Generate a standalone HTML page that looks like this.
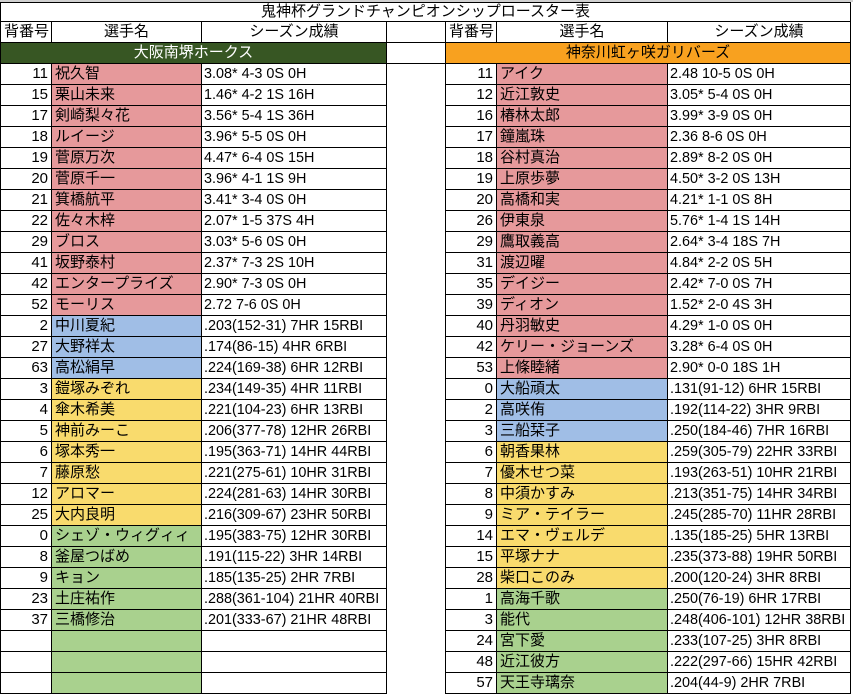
<!DOCTYPE html>
<html><head><meta charset="utf-8"><style>
body{margin:0;background:#fff;width:853px;height:694px;overflow:hidden;font-family:"Liberation Sans","Noto Sans CJK JP",sans-serif;font-size:15px;color:#000}
.top{height:2px;background:#d0d0d0}
table{border-collapse:collapse;table-layout:fixed;width:850px}
td{border:1px solid #000;height:20px;padding:0 3px;white-space:nowrap;overflow:hidden;line-height:20px}
td.n{text-align:right}
td.g{border-top:none;border-bottom:none}
td.s{font-size:14.4px;padding-left:2px}
.c{text-align:center}
.p{background:#e6999b}.b{background:#a0bee6}.y{background:#f9db6d}.gr{background:#a9d18e}
.hg{background:#375623;color:#fff;text-align:center}
.ho{background:#f8a11f;text-align:center}
</style></head><body><div class="top"></div>
<table>
<colgroup><col style="width:51px"><col style="width:150px"><col style="width:185px"><col style="width:59px"><col style="width:51px"><col style="width:171px"><col style="width:183px"></colgroup>
<tr><td colspan="7" class="c" style="height:18px;line-height:18px">鬼神杯グランドチャンピオンシップロースター表</td></tr>
<tr><td class="c">背番号</td><td class="c">選手名</td><td class="c">シーズン成績</td><td></td><td class="c">背番号</td><td class="c">選手名</td><td class="c">シーズン成績</td></tr>
<tr><td colspan="3" class="hg">大阪南堺ホークス</td><td></td><td colspan="3" class="ho">神奈川虹ヶ咲ガリバーズ</td></tr>
<tr><td class="n">11</td><td class="p">祝久智</td><td class="s">3.08* 4-3 0S 0H</td><td class="g"></td><td class="n">11</td><td class="p">アイク</td><td class="s">2.48 10-5 0S 0H</td></tr>
<tr><td class="n">15</td><td class="p">栗山未来</td><td class="s">1.46* 4-2 1S 16H</td><td class="g"></td><td class="n">12</td><td class="p">近江敦史</td><td class="s">3.05* 5-4 0S 0H</td></tr>
<tr><td class="n">17</td><td class="p">剣崎梨々花</td><td class="s">3.56* 5-4 1S 36H</td><td class="g"></td><td class="n">16</td><td class="p">椿林太郎</td><td class="s">3.99* 3-9 0S 0H</td></tr>
<tr><td class="n">18</td><td class="p">ルイージ</td><td class="s">3.96* 5-5 0S 0H</td><td class="g"></td><td class="n">17</td><td class="p">鐘嵐珠</td><td class="s">2.36 8-6 0S 0H</td></tr>
<tr><td class="n">19</td><td class="p">菅原万次</td><td class="s">4.47* 6-4 0S 15H</td><td class="g"></td><td class="n">18</td><td class="p">谷村真治</td><td class="s">2.89* 8-2 0S 0H</td></tr>
<tr><td class="n">20</td><td class="p">菅原千一</td><td class="s">3.96* 4-1 1S 9H</td><td class="g"></td><td class="n">19</td><td class="p">上原歩夢</td><td class="s">4.50* 3-2 0S 13H</td></tr>
<tr><td class="n">21</td><td class="p">箕橋航平</td><td class="s">3.41* 3-4 0S 0H</td><td class="g"></td><td class="n">20</td><td class="p">高橋和実</td><td class="s">4.21* 1-1 0S 8H</td></tr>
<tr><td class="n">22</td><td class="p">佐々木梓</td><td class="s">2.07* 1-5 37S 4H</td><td class="g"></td><td class="n">26</td><td class="p">伊東泉</td><td class="s">5.76* 1-4 1S 14H</td></tr>
<tr><td class="n">29</td><td class="p">ブロス</td><td class="s">3.03* 5-6 0S 0H</td><td class="g"></td><td class="n">29</td><td class="p">鷹取義高</td><td class="s">2.64* 3-4 18S 7H</td></tr>
<tr><td class="n">41</td><td class="p">坂野泰村</td><td class="s">2.37* 7-3 2S 10H</td><td class="g"></td><td class="n">31</td><td class="p">渡辺曜</td><td class="s">4.84* 2-2 0S 5H</td></tr>
<tr><td class="n">42</td><td class="p">エンタープライズ</td><td class="s">2.90* 7-3 0S 0H</td><td class="g"></td><td class="n">35</td><td class="p">デイジー</td><td class="s">2.42* 7-0 0S 7H</td></tr>
<tr><td class="n">52</td><td class="p">モーリス</td><td class="s">2.72 7-6 0S 0H</td><td class="g"></td><td class="n">39</td><td class="p">ディオン</td><td class="s">1.52* 2-0 4S 3H</td></tr>
<tr><td class="n">2</td><td class="b">中川夏紀</td><td class="s">.203(152-31) 7HR 15RBI</td><td class="g"></td><td class="n">40</td><td class="p">丹羽敏史</td><td class="s">4.29* 1-0 0S 0H</td></tr>
<tr><td class="n">27</td><td class="b">大野祥太</td><td class="s">.174(86-15) 4HR 6RBI</td><td class="g"></td><td class="n">42</td><td class="p">ケリー・ジョーンズ</td><td class="s">3.28* 6-4 0S 0H</td></tr>
<tr><td class="n">63</td><td class="b">高松絹早</td><td class="s">.224(169-38) 6HR 12RBI</td><td class="g"></td><td class="n">53</td><td class="p">上條睦緒</td><td class="s">2.90* 0-0 18S 1H</td></tr>
<tr><td class="n">3</td><td class="y">鎧塚みぞれ</td><td class="s">.234(149-35) 4HR 11RBI</td><td class="g"></td><td class="n">0</td><td class="b">大船頑太</td><td class="s">.131(91-12) 6HR 15RBI</td></tr>
<tr><td class="n">4</td><td class="y">傘木希美</td><td class="s">.221(104-23) 6HR 13RBI</td><td class="g"></td><td class="n">2</td><td class="b">高咲侑</td><td class="s">.192(114-22) 3HR 9RBI</td></tr>
<tr><td class="n">5</td><td class="y">神前みーこ</td><td class="s">.206(377-78) 12HR 26RBI</td><td class="g"></td><td class="n">3</td><td class="b">三船栞子</td><td class="s">.250(184-46) 7HR 16RBI</td></tr>
<tr><td class="n">6</td><td class="y">塚本秀一</td><td class="s">.195(363-71) 14HR 44RBI</td><td class="g"></td><td class="n">6</td><td class="y">朝香果林</td><td class="s">.259(305-79) 22HR 33RBI</td></tr>
<tr><td class="n">7</td><td class="y">藤原愁</td><td class="s">.221(275-61) 10HR 31RBI</td><td class="g"></td><td class="n">7</td><td class="y">優木せつ菜</td><td class="s">.193(263-51) 10HR 21RBI</td></tr>
<tr><td class="n">12</td><td class="y">アロマー</td><td class="s">.224(281-63) 14HR 30RBI</td><td class="g"></td><td class="n">8</td><td class="y">中須かすみ</td><td class="s">.213(351-75) 14HR 34RBI</td></tr>
<tr><td class="n">25</td><td class="y">大内良明</td><td class="s">.216(309-67) 23HR 50RBI</td><td class="g"></td><td class="n">9</td><td class="y">ミア・テイラー</td><td class="s">.245(285-70) 11HR 28RBI</td></tr>
<tr><td class="n">0</td><td class="gr">シェゾ・ウィグィィ</td><td class="s">.195(383-75) 12HR 30RBI</td><td class="g"></td><td class="n">14</td><td class="y">エマ・ヴェルデ</td><td class="s">.135(185-25) 5HR 13RBI</td></tr>
<tr><td class="n">8</td><td class="gr">釜屋つばめ</td><td class="s">.191(115-22) 3HR 14RBI</td><td class="g"></td><td class="n">15</td><td class="y">平塚ナナ</td><td class="s">.235(373-88) 19HR 50RBI</td></tr>
<tr><td class="n">9</td><td class="gr">キョン</td><td class="s">.185(135-25) 2HR 7RBI</td><td class="g"></td><td class="n">28</td><td class="y">柴口このみ</td><td class="s">.200(120-24) 3HR 8RBI</td></tr>
<tr><td class="n">23</td><td class="gr">土庄祐作</td><td class="s">.288(361-104) 21HR 40RBI</td><td class="g"></td><td class="n">1</td><td class="gr">高海千歌</td><td class="s">.250(76-19) 6HR 17RBI</td></tr>
<tr><td class="n">37</td><td class="gr">三橋修治</td><td class="s">.201(333-67) 21HR 48RBI</td><td class="g"></td><td class="n">3</td><td class="gr">能代</td><td class="s">.248(406-101) 12HR 38RBI</td></tr>
<tr><td class="n"></td><td class="gr"></td><td></td><td class="g"></td><td class="n">24</td><td class="gr">宮下愛</td><td class="s">.233(107-25) 3HR 8RBI</td></tr>
<tr><td class="n"></td><td class="gr"></td><td></td><td class="g"></td><td class="n">48</td><td class="gr">近江彼方</td><td class="s">.222(297-66) 15HR 42RBI</td></tr>
<tr><td class="n"></td><td class="gr"></td><td></td><td class="g"></td><td class="n">57</td><td class="gr">天王寺璃奈</td><td class="s">.204(44-9) 2HR 7RBI</td></tr>
</table></body></html>
